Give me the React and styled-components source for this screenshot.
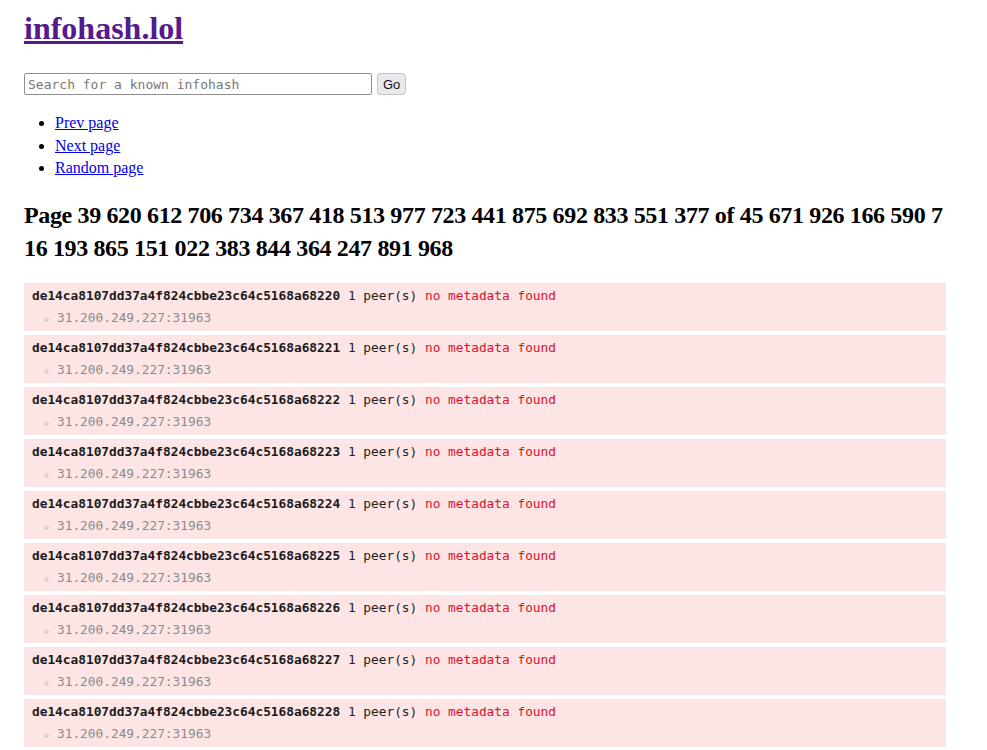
import styled, { createGlobalStyle } from 'styled-components'

const Global = createGlobalStyle`
  html, body { margin: 0; background: #fff; }
  body {
    font-family: "Liberation Serif", "Times New Roman", serif;
    font-size: 16px;
    line-height: 1.4;
    color: #000;
  }
`

const Page = styled.div`
  max-width: 922px;
  padding: 0 24px;
`

const Title = styled.h1`
  font-size: 32px;
  line-height: 44px;
  margin: 6px 0 23px;
  a { color: #551a8b; }
`

const SearchForm = styled.form`
  display: flex;
  align-items: center;
  gap: 5px;
  margin: 0 0 17px;
`

const SearchInput = styled.input`
  width: 348px;
  height: 22px;
  box-sizing: border-box;
  padding: 1px 3px;
  border: 1px solid #8f8f8f;
  border-radius: 2px;
  font-family: "DejaVu Sans Mono", monospace;
  font-size: 13px;
  &::placeholder { color: #777; }
`

const GoButton = styled.button`
  height: 22px;
  box-sizing: border-box;
  padding: 0 5px;
  border: 1px solid #c4c4c8;
  border-radius: 4px;
  background: #e9e9ed;
  font-family: "Liberation Sans", Arial, sans-serif;
  font-size: 13px;
  color: #111;
`

const NavList = styled.ul`
  margin: 0;
  padding-left: 31px;
  li { line-height: 22.5px; }
  a { color: #0000ee; }
`

const Heading = styled.h2`
  font-size: 24px;
  line-height: 33px;
  letter-spacing: -0.36px;
  margin: 19px 0 18px;
  word-break: break-all;
`

const Results = styled.div`
  display: flex;
  flex-direction: column;
  gap: 4px;
  font-family: "DejaVu Sans Mono", monospace;
  font-size: 12.8px;
`

const Row = styled.div`
  background: #fde5e5;
  padding: 2px 8px;
  line-height: 22px;
`

const Hash = styled.b`
  color: #1a1a1a;
`

const Peers = styled.span`
  color: #222;
`

const Missing = styled.span`
  color: #e0102a;
`

const PeerList = styled.ul`
  list-style: circle;
  margin: 0;
  padding-left: 25px;
  color: #8a8a8a;
  li::marker { color: #c8b4b4; font-size: 9px; }
`

const page = '39 620 612 706 734 367 418 513 977 723 441 875 692 833 551 377'
const total = '45 671 926 166 590 716 193 865 151 022 383 844 364 247 891 968'

const rows = Array.from({ length: 9 }, (_, i) => ({
  hash: 'de14ca8107dd37a4f824cbbe23c64c5168a6822' + i,
  peer: '31.200.249.227:31963',
}))

export default function App() {
  return (
    <>
      <Global />
      <Page>
        <Title><a href="#">infohash.lol</a></Title>
        <SearchForm onSubmit={e => e.preventDefault()}>
          <SearchInput placeholder="Search for a known infohash" />
          <GoButton>Go</GoButton>
        </SearchForm>
        <NavList>
          <li><a href="#">Prev page</a></li>
          <li><a href="#">Next page</a></li>
          <li><a href="#">Random page</a></li>
        </NavList>
        <Heading>Page {page} of {total}</Heading>
        <Results>
          {rows.map(r => (
            <Row key={r.hash}>
              <Hash>{r.hash}</Hash> <Peers>1 peer(s)</Peers> <Missing>no metadata found</Missing>
              <PeerList>
                <li>{r.peer}</li>
              </PeerList>
            </Row>
          ))}
        </Results>
      </Page>
    </>
  )
}
